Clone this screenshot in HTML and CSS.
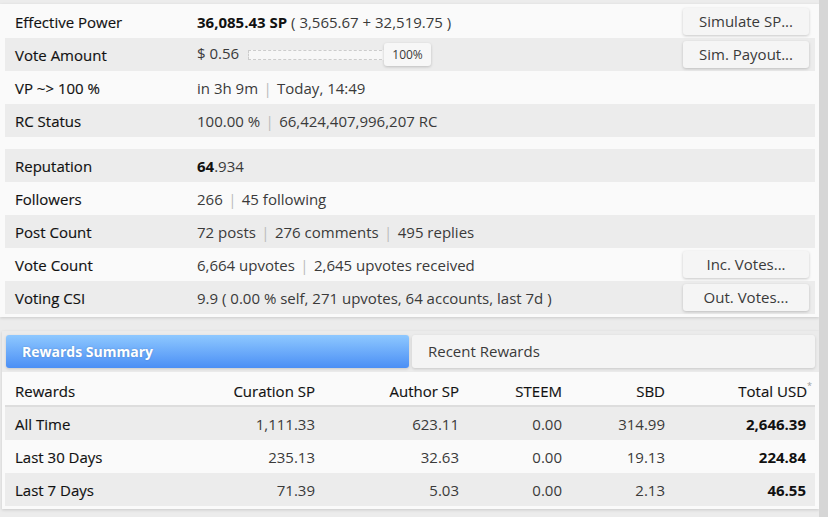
FILE: index.html
```html
<!DOCTYPE html>
<html lang="en">
<head>
	<meta charset="utf-8">
	<title>Account Info</title>
	<link rel="stylesheet" href="styles.css">
</head>
<body>
	<div class="page">
		<div class="main">
			<div class="panel info">
				<div class="row">
					<div class="label">Effective Power</div>
					<div class="value"><b>36,085.43 SP</b> ( 3,565.67 + 32,519.75 )</div>
					<div class="btn">Simulate SP...</div>
				</div>
				<div class="row alt">
					<div class="label">Vote Amount</div>
					<div class="value">$ 0.56 <span class="slider"><span class="track"></span><span class="knob">100%</span></span></div>
					<div class="btn">Sim. Payout...</div>
				</div>
				<div class="row">
					<div class="label">VP ~&gt; 100 %</div>
					<div class="value">in 3h 9m <span class="sep">|</span> Today, 14:49</div>
				</div>
				<div class="row alt">
					<div class="label">RC Status</div>
					<div class="value">100.00 % <span class="sep">|</span> 66,424,407,996,207 RC</div>
				</div>
				<div class="spacer"></div>
				<div class="row alt">
					<div class="label">Reputation</div>
					<div class="value"><b>64</b>.934</div>
				</div>
				<div class="row">
					<div class="label">Followers</div>
					<div class="value">266 <span class="sep">|</span> 45 following</div>
				</div>
				<div class="row alt">
					<div class="label">Post Count</div>
					<div class="value">72 posts <span class="sep">|</span> 276 comments <span class="sep">|</span> 495 replies</div>
				</div>
				<div class="row">
					<div class="label">Vote Count</div>
					<div class="value">6,664 upvotes <span class="sep">|</span> 2,645 upvotes received</div>
					<div class="btn">Inc. Votes...</div>
				</div>
				<div class="row alt">
					<div class="label">Voting CSI</div>
					<div class="value">9.9 ( 0.00 % self, 271 upvotes, 64 accounts, last 7d )</div>
					<div class="btn">Out. Votes...</div>
				</div>
			</div>

			<div class="panel rewards">
				<div class="tabs">
					<div class="tab active">Rewards Summary</div>
					<div class="tab">Recent Rewards</div>
				</div>
				<table class="summary">
					<thead>
						<tr>
							<th class="name">Rewards</th>
							<th>Curation SP</th>
							<th>Author SP</th>
							<th>STEEM</th>
							<th>SBD</th>
							<th class="total">Total USD<sup>*</sup></th>
						</tr>
					</thead>
					<tbody>
						<tr class="alt">
							<td class="name">All Time</td>
							<td>1,111.33</td>
							<td>623.11</td>
							<td>0.00</td>
							<td>314.99</td>
							<td class="total"><b>2,646.39</b></td>
						</tr>
						<tr>
							<td class="name">Last 30 Days</td>
							<td>235.13</td>
							<td>32.63</td>
							<td>0.00</td>
							<td>19.13</td>
							<td class="total"><b>224.84</b></td>
						</tr>
						<tr class="alt">
							<td class="name">Last 7 Days</td>
							<td>71.39</td>
							<td>5.03</td>
							<td>0.00</td>
							<td>2.13</td>
							<td class="total"><b>46.55</b></td>
						</tr>
					</tbody>
				</table>
			</div>
		</div>
		<div class="edge"></div>
	</div>
</body>
</html>
```

FILE: styles.css
```css
html, body {
	margin: 0;
	height: 100%;
}
body {
	background: #ececec;
	font-family: "Open Sans", sans-serif;
	font-size: 15px;
	color: #3a3a3a;
}
.page {
	display: flex;
	min-height: 100%;
}
.main {
	width: 819px;
}
.edge {
	flex: 1;
	background: #d6d6d6;
}
.panel {
	background: #fafafa;
	box-shadow: 0 1px 3px rgba(0, 0, 0, 0.15);
}
.info {
	margin-top: 4px;
	padding: 1px 4px 3px 5px;
}
.row {
	display: flex;
	align-items: center;
	height: 33px;
}
.row.alt {
	background: #ececec;
}
.label {
	width: 182px;
	padding-left: 10px;
	color: #111;
	flex-shrink: 0;
	-webkit-text-stroke: 0.15px #111;
}
.value {
	flex: 1;
	white-space: nowrap;
}
.value b {
	color: #111;
}
.sep {
	color: #bbb;
	margin: 0 1.5px;
}
.spacer {
	height: 12px;
}
.btn {
	width: 126px;
	height: 27px;
	line-height: 27px;
	margin-right: 6px;
	text-align: center;
	color: #3a3a3a;
	background: #f5f5f5;
	border-radius: 3px;
	box-shadow: 0 1px 3px rgba(0, 0, 0, 0.2);
}
.slider {
	display: inline-flex;
	align-items: center;
	vertical-align: middle;
	margin-left: 5px;
}
.track {
	width: 137px;
	height: 8px;
	border: 1px dashed #ccc;
	background: #f7f7f7;
}
.knob {
	width: 47px;
	height: 23px;
	line-height: 23px;
	margin-left: -3px;
	text-align: center;
	font-size: 12px;
	background: #f7f7f7;
	border-radius: 3px;
	box-shadow: 0 1px 3px rgba(0, 0, 0, 0.2);
}
.rewards {
	margin: 14px 0 0 2px;
	width: 817px;
	padding-bottom: 3px;
}
.tabs {
	display: flex;
	gap: 3px;
	background: #ebebeb;
	padding: 4px;
}
.tab {
	flex: 1;
	height: 33px;
	line-height: 33px;
	padding-left: 16px;
	color: #3a3a3a;
	background: #f4f4f4;
	border-radius: 3px;
	box-shadow: 0 1px 3px rgba(0, 0, 0, 0.15);
}
.tab.active {
	color: #fff;
	font-weight: bold;
	font-size: 14px;
	background: linear-gradient(#8ec8ff, #4b8ff5);
	text-shadow: 0 0 2px rgba(0, 0, 0, 0.2);
}
.summary {
	width: 810px;
	margin: 4px 0 0 3px;
	border-collapse: collapse;
}
.summary th, .summary td {
	height: 33px;
	padding: 0;
	text-align: right;
}
.summary th {
	height: 29px;
	font-weight: normal;
	color: #111;
	border-bottom: 2px solid #ddd;
	-webkit-text-stroke: 0.15px #111;
}
.summary .name {
	text-align: left;
	padding-left: 10px;
	width: 150px;
	color: #111;
}
.summary td.name {
	-webkit-text-stroke: 0.15px #111;
}
.summary th:nth-child(2), .summary td:nth-child(2) {
	width: 150px;
}
.summary th:nth-child(3), .summary td:nth-child(3) {
	width: 144px;
}
.summary th:nth-child(4), .summary td:nth-child(4) {
	width: 103px;
}
.summary th:nth-child(5), .summary td:nth-child(5) {
	width: 103px;
}
.summary .total {
	padding-right: 9px;
}
.summary th.total {
	padding-right: 3px;
}
.summary sup {
	font-size: 9px;
	color: #999;
	vertical-align: top;
	line-height: 1;
	-webkit-text-stroke: 0;
}
.summary td b {
	color: #111;
}
.summary tr.alt td {
	background: #ececec;
}
```
